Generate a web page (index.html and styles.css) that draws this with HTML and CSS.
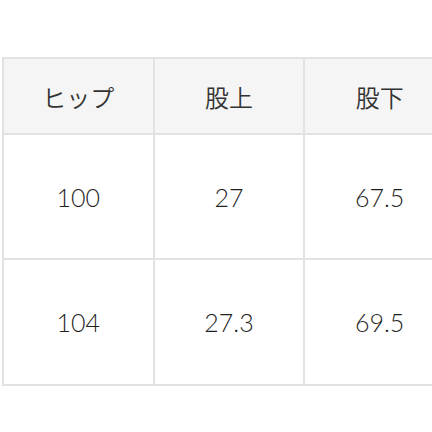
FILE: index.html
```html
<!DOCTYPE html>
<html lang="ja">
<head>
<meta charset="utf-8">
<link rel="stylesheet" href="styles.css">
</head>
<body>
<div class="wrap">
<table class="size-table">
  <thead>
    <tr class="head-row">
      <th>ヒップ</th>
      <th>股上</th>
      <th>股下</th>
    </tr>
  </thead>
  <tbody>
    <tr class="row-a">
      <td>100</td>
      <td>27</td>
      <td>67.5</td>
    </tr>
    <tr class="row-b">
      <td>104</td>
      <td>27.3</td>
      <td>69.5</td>
    </tr>
  </tbody>
</table>
</div>
</body>
</html>
```
FILE: styles.css
```css
html, body {
  margin: 0;
  padding: 0;
  background: #ffffff;
  overflow: hidden;
}
.wrap {
  width: 432px;
  height: 432px;
  overflow: hidden;
  padding-top: 57px;
  padding-left: 2px;
  box-sizing: border-box;
}
.size-table {
  border-collapse: separate;
  border-spacing: 0;
  border-left: 2px solid #e2e2e2;
  border-top: 2px solid #e2e2e2;
  table-layout: fixed;
  width: 454px;
  font-family: "Noto Sans CJK JP", "Noto Sans", sans-serif;
  color: #333333;
}
.size-table th,
.size-table td {
  width: 150px;
  box-sizing: border-box;
  border-right: 2px solid #e2e2e2;
  border-bottom: 2px solid #e2e2e2;
  text-align: center;
  vertical-align: middle;
  padding: 0;
}
.size-table th {
  background: #f5f5f5;
  font-weight: 350;
  font-size: 24px;
  height: 76px;
}
.size-table td {
  font-family: Lato, "Noto Sans", sans-serif;
  font-size: 25px;
  font-weight: 300;
  color: #1f1f1f;
}
.row-a td { height: 125px; }
.row-b td { height: 126px; }
```
